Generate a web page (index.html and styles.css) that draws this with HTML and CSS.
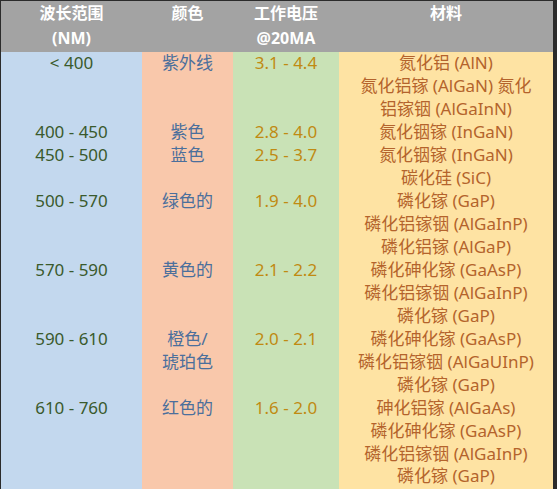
FILE: index.html
```html
<!DOCTYPE html>
<html lang="zh">
<head>
<meta charset="utf-8">
<link rel="stylesheet" href="styles.css">
</head>
<body>
<div class="frame">
<table class="led">
  <colgroup>
    <col class="w1"><col class="w2"><col class="w3"><col class="w4">
  </colgroup>
  <thead>
    <tr>
      <th>波长范围<br>(NM)</th>
      <th>颜色</th>
      <th>工作电压<br>@20MA</th>
      <th>材料</th>
    </tr>
  </thead>
  <tbody>
    <tr>
      <td class="c1">&lt; 400</td>
      <td class="c2">紫外线</td>
      <td class="c3">3.1 - 4.4</td>
      <td class="c4">氮化铝 (AlN)<br>氮化铝镓 (AlGaN) 氮化<br>铝镓铟 (AlGaInN)</td>
    </tr>
    <tr>
      <td class="c1">400 - 450</td>
      <td class="c2">紫色</td>
      <td class="c3">2.8 - 4.0</td>
      <td class="c4">氮化铟镓 (InGaN)</td>
    </tr>
    <tr>
      <td class="c1">450 - 500</td>
      <td class="c2">蓝色</td>
      <td class="c3">2.5 - 3.7</td>
      <td class="c4">氮化铟镓 (InGaN)<br>碳化硅 (SiC)</td>
    </tr>
    <tr>
      <td class="c1">500 - 570</td>
      <td class="c2">绿色的</td>
      <td class="c3">1.9 - 4.0</td>
      <td class="c4">磷化镓 (GaP)<br>磷化铝镓铟 (AlGaInP)<br>磷化铝镓 (AlGaP)</td>
    </tr>
    <tr>
      <td class="c1">570 - 590</td>
      <td class="c2">黄色的</td>
      <td class="c3">2.1 - 2.2</td>
      <td class="c4">磷化砷化镓 (GaAsP)<br>磷化铝镓铟 (AlGaInP)<br>磷化镓 (GaP)</td>
    </tr>
    <tr>
      <td class="c1">590 - 610</td>
      <td class="c2">橙色/<br>琥珀色</td>
      <td class="c3">2.0 - 2.1</td>
      <td class="c4">磷化砷化镓 (GaAsP)<br>磷化铝镓铟 (AlGaUInP)<br>磷化镓 (GaP)</td>
    </tr>
    <tr>
      <td class="c1">610 - 760</td>
      <td class="c2">红色的</td>
      <td class="c3">1.6 - 2.0</td>
      <td class="c4">砷化铝镓 (AlGaAs)<br>磷化砷化镓 (GaAsP)<br>磷化铝镓铟 (AlGaInP)<br>磷化镓 (GaP)</td>
    </tr>
    <tr class="filler">
      <td class="c1"></td><td class="c2"></td><td class="c3"></td><td class="c4"></td>
    </tr>
  </tbody>
</table>
</div>
</body>
</html>
```

FILE: styles.css
```css
html, body {
  margin: 0;
  padding: 0;
  background: #ffffff;
}

.frame {
  width: 552px;
  height: 488px;
  border-top: 1px solid #2b2b2b;
  border-left: 1px solid #2b2b2b;
  border-right: 4px solid #2b2b2b;
  overflow: hidden;
  font-family: "Noto Sans", "Noto Sans CJK SC", sans-serif;
}

.led {
  width: 552px;
  height: 488px;
  border-collapse: collapse;
  table-layout: fixed;
}

.w1 { width: 141px; }
.w2 { width: 91px; }
.w3 { width: 106px; }
.w4 { width: 214px; }

.led th {
  background: #a3a3a3;
  color: #ffffff;
  font-weight: 700;
  font-size: 16px;
  line-height: 25px;
  height: 51px;
  padding: 0;
  vertical-align: top;
  text-align: center;
}

.led td {
  padding: 0;
  font-size: 17px;
  line-height: 22.8px;
  vertical-align: top;
  text-align: center;
  white-space: nowrap;
}

.led .filler td {
  height: auto;
}

.c1 { background: #c3d8ee; color: #3a5a2c; }
.c2 { background: #f9c8ab; color: #4b6f9c; }
.c3 { background: #c9e2b6; color: #c08a12; }
.c4 { background: #fee3a3; color: #b4632c; }
```
